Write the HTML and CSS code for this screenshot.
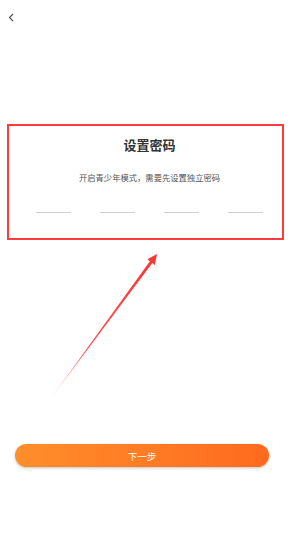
FILE: index.html
```html
<!DOCTYPE html>
<html lang="zh-CN">
<head>
    <meta charset="UTF-8">
    <meta name="viewport" content="width=device-width, initial-scale=1.0">
    <title>设置密码</title>
    <link rel="stylesheet" href="styles.css">
</head>
<body>
<div class="page">
  <div class="header">
    <svg class="back" width="6" height="9" viewBox="0 0 6 9">
      <path d="M5 1 L1.5 4.5 L5 8" fill="none" stroke="#555" stroke-width="1.2"/>
    </svg>
  </div>

  <div class="box">
    <h1 class="title">设置密码</h1>
    <p class="tip">开启青少年模式，需要先设置独立密码</p>
    <div class="inputs">
      <span class="slot"></span>
      <span class="slot"></span>
      <span class="slot"></span>
      <span class="slot"></span>
    </div>
  </div>

  <button class="next">下一步</button>

  <!-- annotation arrow -->
  <svg class="arrow" width="300" height="543" viewBox="0 0 300 543">
    <defs>
      <linearGradient id="fade" x1="49" y1="401" x2="157" y2="254" gradientUnits="userSpaceOnUse">
        <stop offset="0" stop-color="#ff3b3b" stop-opacity="0.1"/>
        <stop offset="0.35" stop-color="#ff3b3b" stop-opacity="0.9"/>
        <stop offset="1" stop-color="#ff3333"/>
      </linearGradient>
    </defs>
    <polygon points="49,401 152.3,263 154.8,265 157,254 147.4,259.3 149.9,261.2" fill="url(#fade)"/>
  </svg>
</div>
</body>
</html>
```

FILE: styles.css
```css
body {
  margin: 0;
  font-family: "Noto Sans CJK SC", "Noto Sans", sans-serif;
  background: #fff;
}

.page {
  position: relative;
  width: 300px;
  height: 543px;
  overflow: hidden;
}

.header {
  height: 36px;
  padding: 13px 0 0 8px;
  box-sizing: border-box;
}

.back {
  display: block;
}

.box {
  margin: 88px 16px 0 7px;
  height: 116px;
  box-sizing: border-box;
  border: 2px solid #ff3b3b;
  padding: 10px 0 0 8px;
  text-align: center;
}

.title {
  margin: 0;
  font-size: 13px;
  line-height: 18px;
  font-weight: bold;
  color: #333;
}

.tip {
  margin: 17px 0 0;
  font-size: 8.3px;
  line-height: 12px;
  color: #555;
}

.inputs {
  display: flex;
  gap: 29px;
  padding-left: 19px;
  margin-top: 29px;
}

.slot {
  width: 35px;
  height: 1px;
  background: #cfcfcf;
}

.next {
  display: block;
  margin: 204px 0 0 15px;
  width: 254px;
  height: 23px;
  border: none;
  border-radius: 12px;
  background: linear-gradient(90deg, #ff8e2b, #ff6a1e);
  box-shadow: 0 1px 3px rgba(0, 0, 0, 0.25);
  color: #fff;
  font-family: "Noto Sans CJK SC", sans-serif;
  font-size: 9.5px;
  padding: 0;
}

.arrow {
  position: absolute;
  left: 0;
  top: 0;
  pointer-events: none;
}
```
